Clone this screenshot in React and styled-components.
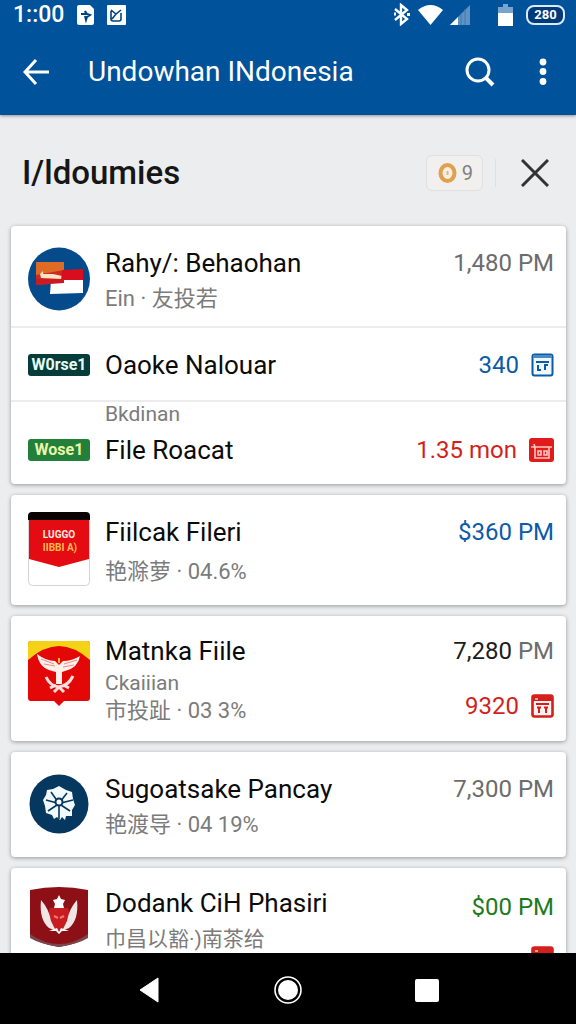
import React from "react";
import styled, { createGlobalStyle } from "styled-components";

const GlobalStyle = createGlobalStyle`
  * {
    box-sizing: border-box;
  }
  body {
    margin: 0;
    font-family: Roboto, "Noto Sans CJK SC", sans-serif;
    background: #000;
  }
`;

const Screen = styled.div`
  height: 100vh;
  display: flex;
  flex-direction: column;
  background: #ecedee;
`;

const Header = styled.header`
  background: #00529b;
  color: #fff;
  box-shadow: 0 1px 3px rgba(0, 0, 0, 0.4);
`;

const StatusBar = styled.div`
  height: 29px;
  padding: 0 11px 0 13px;
  display: flex;
  align-items: center;
  justify-content: space-between;
`;

const StatusGroup = styled.div`
  display: flex;
  align-items: center;
  gap: ${({ $gap }) => $gap}px;
`;

const Time = styled.span`
  font-size: 23px;
  font-weight: 500;
  line-height: 28px;
`;

const Percent = styled.span`
  width: 39px;
  height: 20px;
  border: 2px solid #d9ecff;
  border-radius: 8px;
  background: #003a78;
  font-size: 13px;
  font-weight: 700;
  line-height: 16px;
  text-align: center;
`;

const Toolbar = styled.div`
  height: 86px;
  padding: 0 23px;
  display: flex;
  align-items: center;
`;

const IconButton = styled.button`
  display: flex;
  align-items: center;
  justify-content: center;
  padding: 0;
  border: 0;
  background: none;
  color: inherit;
  cursor: pointer;
`;

const Title = styled.h1`
  flex: 1;
  margin: 0 0 0 38px;
  font-size: 28px;
  font-weight: 400;
  line-height: 36px;
`;

const Actions = styled.div`
  display: flex;
  gap: 38px;
`;

const Content = styled.main`
  flex: 1;
  min-height: 0;
  overflow-y: auto;
  scrollbar-width: none;
`;

const SectionHeader = styled.div`
  height: 111px;
  padding: 4px 27px 0 22px;
  display: flex;
  align-items: center;
`;

const SectionTitle = styled.h2`
  flex: 1;
  margin: 0;
  font-size: 33px;
  font-weight: 500;
  line-height: 40px;
  color: #161616;
`;

const Chip = styled.div`
  height: 36px;
  padding: 0 9px 0 11px;
  display: flex;
  align-items: center;
  gap: 5px;
  border: 1px solid #e0e0e0;
  border-radius: 6px;
  background: #f1f0ef;
  color: #808080;
  font-size: 20px;
`;

const Divider = styled.div`
  width: 1px;
  height: 28px;
  margin: 0 25px 0 12px;
  background: #dfdfdf;
`;

const List = styled.div`
  padding: 0 10px 12px 11px;
  display: flex;
  flex-direction: column;
  gap: 11px;
`;

const Card = styled.section`
  background: #fff;
  border-radius: 4px;
  box-shadow: 0 1px 4px rgba(0, 0, 0, 0.36);
`;

const Row = styled.div`
  padding: ${({ $pad }) => $pad};
  display: grid;
  grid-template-columns: 62px 1fr auto;
  column-gap: 15px;
  & + & {
    border-top: 2px solid #ececee;
  }
`;

const Logo = styled.div`
  display: flex;
  justify-content: center;
  align-self: ${({ $align }) => $align || "center"};
`;

const Badge = styled.span`
  width: 62px;
  height: 22px;
  margin-bottom: ${({ $low }) => ($low ? 5 : 0)}px;
  border-radius: 3px;
  background: ${({ $bg }) => $bg};
  color: ${({ $color }) => $color};
  font-size: 16px;
  font-weight: 700;
  line-height: 22px;
  text-align: center;
`;

const Texts = styled.div`
  display: flex;
  flex-direction: column;
  gap: ${({ $gap }) => $gap || 0}px;
  padding-top: ${({ $top }) => $top || 0}px;
`;

const Name = styled.h3`
  margin: 0;
  font-size: 26px;
  font-weight: 400;
  line-height: 32px;
  color: #0b0b0b;
`;

const Detail = styled.div`
  font-size: 21px;
  line-height: 24px;
  color: #7b7b7b;
`;

const Meta = styled(Detail)`
  font-size: 22px;
`;

const Side = styled.div`
  display: flex;
  flex-direction: column;
  align-items: flex-end;
  align-self: ${({ $align }) => $align || "start"};
  gap: 23px;
  padding-top: ${({ $top }) => $top || 0}px;
`;

const Amount = styled.div`
  display: flex;
  align-items: center;
  gap: 12px;
  font-size: 24px;
  line-height: 32px;
  color: ${({ $color }) => $color || "#6c6c6c"};
`;

const Unit = styled.span`
  color: #6c6c6c;
`;

const NavBar = styled.nav`
  height: 71px;
  padding-top: 3px;
  display: flex;
  align-items: center;
  justify-content: center;
  gap: 91px;
  background: #000;
`;

const NavButton = styled(IconButton)`
  width: 48px;
  height: 48px;
`;

const BLUE = "#0b5ba8";
const RED = "#d41f1c";

const SimIcon = () => (
  <svg width="17" height="20" viewBox="0 0 17 20">
    <path d="M2 0h11l4 4v14q0 2-2 2H2q-2 0-2-2V2q0-2 2-2z" fill="#fff" />
    <path d="M4 9h5l-1-3 2 3 3 1-3 2-1 3-1-4" fill="none" stroke="#00427f" strokeWidth="2" />
  </svg>
);

const PictureIcon = () => (
  <svg width="19" height="20" viewBox="0 0 19 20">
    <rect width="19" height="20" rx="1" fill="#fff" />
    <path d="M4 5l5 4 5-4M4 6v8q0 2 2 2h6q2 0 2-2V8M5 14l4-5" fill="none" stroke="#00427f" strokeWidth="1.600" />
  </svg>
);

const BluetoothIcon = () => (
  <svg width="18" height="23" viewBox="0 0 18 23" fill="none" stroke="#fff" strokeWidth="2.400">
    <path d="M2 6l12 10-6 5V2l6 5L2 17" />
    <path d="M1 11h2M14 11.500h3" strokeWidth="3" />
  </svg>
);

const WifiIcon = () => (
  <svg width="25" height="20" viewBox="0 0 25 20">
    <path d="M0 5Q12.500-5 25 5L12.500 20z" fill="#fff" />
  </svg>
);

const SignalIcon = () => (
  <svg width="20" height="20" viewBox="0 0 20 20">
    <path d="M20 0v20H0z" fill="#5e92c3" />
    <path d="M8 12v8H0z" fill="#fff" />
    <path d="M11 8v12M15 4v16" stroke="#4079b3" />
  </svg>
);

const BatteryIcon = () => (
  <svg width="15" height="22" viewBox="0 0 15 22">
    <path d="M5 0h5v3h5v6H0V3h5z" fill="#78a4cf" />
    <path d="M0 9h15v13H0z" fill="#fff" />
  </svg>
);

const BackIcon = () => (
  <svg width="27" height="26" viewBox="0 0 27 26" fill="none" stroke="#fff" strokeWidth="3">
    <path d="M26 13H3M13 1L2 13l11 12" />
  </svg>
);

const SearchIcon = () => (
  <svg width="30" height="30" viewBox="0 0 30 30" fill="none" stroke="#fff" strokeWidth="3">
    <circle cx="13" cy="13" r="11" />
    <path d="M21 21l7 7" strokeWidth="4" />
  </svg>
);

const MoreIcon = () => (
  <svg width="20" height="28" viewBox="0 0 20 28" fill="#fff">
    <circle cx="10" cy="4" r="3.400" />
    <circle cx="10" cy="13.500" r="3.400" />
    <circle cx="10" cy="23.500" r="3.400" />
  </svg>
);

const CoinIcon = () => (
  <svg width="19" height="20" viewBox="0 0 19 20">
    <ellipse cx="9.500" cy="10" rx="7" ry="8" fill="#fbf0df" stroke="#dfa050" strokeWidth="4" />
    <path d="M9.500 8v4" stroke="#d8b98d" strokeWidth="2" />
  </svg>
);

const CloseIcon = () => (
  <svg width="28" height="28" viewBox="0 0 28 28" stroke="#333" strokeWidth="3">
    <path d="M1 1l26 26M27 1L1 27" />
  </svg>
);

const DateIcon = () => (
  <svg width="23" height="24" viewBox="0 0 23 24" fill="none" stroke={BLUE} strokeWidth="2">
    <rect x="1.500" y="1.500" width="20" height="21" rx="2" fill="#f0f7fd" />
    <path d="M2 3.500h19" stroke="#4b8ac4" strokeWidth="3" />
    <path d="M5 9h13M7 12v5h3M14 12v5M13 12h4" />
  </svg>
);

const ShopIcon = () => (
  <svg width="25" height="24" viewBox="0 0 25 24">
    <rect width="25" height="24" rx="3" fill="#df1b1b" />
    <path d="M2 9h21M6 9v11h14V9M5 6l1 3M9 13v4h3v-4zM15 13v4h3v-4z" fill="none" stroke="#ffc9c2" strokeWidth="1.600" />
  </svg>
);

const CalendarIcon = () => (
  <svg width="23" height="24" viewBox="0 0 23 24">
    <rect x="1.500" y="1.500" width="20" height="21" rx="2" fill="#fff2ef" stroke={RED} strokeWidth="2.600" />
    <path d="M2 2h19v5H2z" fill={RED} />
    <path d="M4 5h3" stroke="#ff9e92" strokeWidth="2" />
    <path d="M5 10h13M6 13.500h4M13 13.500h4M8 13v6M15 13v6" fill="none" stroke={RED} strokeWidth="2" />
  </svg>
);

const FlagsLogo = () => (
  <svg width="62" height="64" viewBox="0 0 62 64">
    <ellipse cx="31" cy="32" rx="31" ry="31.500" fill="#054b8b" />
    <path d="M8 15h28v21l-28 2z" fill="#cf2a20" />
    <path d="M8 15h28v8L8 28z" fill="#dd6a25" />
    <path d="M12 27l3-3v3h10l9 2v3l-21-1z" fill="#ffe3c4" />
    <path d="M34 23l21-1v12H33z" fill="#d90d1d" />
    <path d="M23 33h32v13l-33 1z" fill="#fff" />
    <path d="M8 32h28v4l-28 2z" fill="#c91c22" />
  </svg>
);

const LabelText = styled.text`
  font-size: ${({ $size }) => $size}px;
  font-weight: 700;
  text-anchor: middle;
`;

const PackLogo = () => (
  <svg width="62" height="74" viewBox="0 0 62 74">
    <rect x="0.500" y="0.500" width="61" height="73" rx="4" fill="#fff" stroke="#d4d4d4" />
    <path d="M0 8V4q0-4 4-4h54q4 0 4 4v4z" fill="#090304" />
    <path d="M1 8h60v39L31 55 1 47z" fill="#e50b12" />
    <LabelText x="31" y="26" $size={10} fill="#ffe9df">LUGGO</LabelText>
    <LabelText x="32" y="39" $size={10} fill="#ffbc4b">IIBBI A)</LabelText>
  </svg>
);

const GarudaLogo = () => (
  <svg width="62" height="76" viewBox="0 0 62 76">
    <path d="M3 0h56q3 0 3 3v54q0 3-3 3H36l-5 5-5-5H3q-3 0-3-3V3q0-3 3-3z" fill="#e30707" />
    <path d="M3 0h56q3 0 3 3v16Q46 5 31 5T0 19V3q0-3 3-3z" fill="#f4d316" />
    <path d="M9 13q9 7 18 7l4 4 4-4q9 0 17-5-2 12-15 15l-3 1v12h-6V31l-4-1Q11 27 9 13z" fill="#fff0eb" />
    <path d="M13 18l13 5M16 23l11 2M49 19l-13 4M46 24l-11 2" stroke="#eb8a86" />
    <path d="M18 36q4 9 13 10 9-1 14-11M22 47l6-3M41 47l-6-3M26 51l5-5 5 5" fill="none" stroke="#ffe0da" strokeWidth="3" />
    <path d="M31 17v5" stroke="#f2af2d" strokeWidth="2" />
  </svg>
);

const FlowerLogo = () => (
  <svg width="60" height="62" viewBox="0 0 60 62">
    <circle cx="30" cy="30" r="29.500" fill="#06375f" />
    <path d="M30 12l7 4 6 2 1 7 2 6-3 5 0 6-6 0-1 4-3-3-2 3-3-3-3 2-2-4-6-2-1-7-2-6 3-5 1-5 6-1z" fill="#f2faff" />
    <path d="M30 30v15M29 28l-7-10M31 28l7-9M28 29l-11-3M32 29l12-3M28 31l-9 6M32 31l9 6" stroke="#06375f" strokeWidth="1.600" />
    <circle cx="30" cy="28" r="3.500" fill="#fff" stroke="#06375f" strokeWidth="2" />
  </svg>
);

const ShieldLogo = () => (
  <svg width="58" height="60" viewBox="0 0 58 60">
    <path d="M0 3Q29-3 58 3v47q-10 7-29 10Q10 57 0 50z" fill="#8c1015" />
    <path d="M0 47q14 10 29 10t29-10v4q-10 6-29 9Q10 57 0 51z" fill="#7a474a" />
    <path d="M29 8l2 4 4 1-2 4 1 4H24l1-4-2-4 4-1z" fill="#fff" />
    <path d="M20 21h18l3 9-6 13h-12l-6-13z" fill="#c71c20" />
    <path d="M11 13q-2 20 8 28l7 3-5-10q-2-12-10-21zM47 13q2 20-8 28l-7 3 5-10q2-12 10-21z" fill="#f2e5e5" />
    <path d="M19 44l8-3 2 4 2-4 8 3-7 0-3 3-3-3z" fill="#fff" />
    <path d="M24 29l4 2M34 29l-4 2" stroke="#ff7770" strokeWidth="2" />
  </svg>
);

const App = () => {
  return (
    <>
      <GlobalStyle />
      <Screen>
        <Header>
          <StatusBar>
            <StatusGroup $gap={13}>
              <Time>1::00</Time>
              <SimIcon />
              <PictureIcon />
            </StatusGroup>
            <StatusGroup $gap={13}>
              <StatusGroup $gap={28}>
                <StatusGroup $gap={7}>
                  <BluetoothIcon />
                  <WifiIcon />
                  <SignalIcon />
                </StatusGroup>
                <BatteryIcon />
              </StatusGroup>
              <Percent>280</Percent>
            </StatusGroup>
          </StatusBar>
          <Toolbar>
            <IconButton aria-label="Back">
              <BackIcon />
            </IconButton>
            <Title>Undowhan INdonesia</Title>
            <Actions>
              <IconButton aria-label="Search">
                <SearchIcon />
              </IconButton>
              <IconButton aria-label="More">
                <MoreIcon />
              </IconButton>
            </Actions>
          </Toolbar>
        </Header>

        <Content>
          <SectionHeader>
            <SectionTitle>I/ldoumies</SectionTitle>
            <Chip>
              <CoinIcon />
              <span>9</span>
            </Chip>
            <Divider />
            <IconButton aria-label="Close">
              <CloseIcon />
            </IconButton>
          </SectionHeader>

          <List>
            <Card>
              <Row $pad="21px 12px 15px 17px">
                <Logo>
                  <FlagsLogo />
                </Logo>
                <Texts $gap={8}>
                  <Name>Rahy/: Behaohan</Name>
                  <Meta>Ein · 友投若</Meta>
                </Texts>
                <Side>
                  <Amount>1,480 PM</Amount>
                </Side>
              </Row>
              <Row $pad="21px 12px 19px 17px">
                <Logo>
                  <Badge $bg="#063c39" $color="#e4fbf5">W0rse1</Badge>
                </Logo>
                <Name>Oaoke Nalouar</Name>
                <Side>
                  <Amount $color={BLUE}>
                    340
                    <DateIcon />
                  </Amount>
                </Side>
              </Row>
              <Row $pad="0 12px 18px 17px">
                <Logo $align="end">
                  <Badge $low $bg="#23803a" $color="#eaf7a8">Wose1</Badge>
                </Logo>
                <Texts $gap={8}>
                  <Detail>Bkdinan</Detail>
                  <Name>File Roacat</Name>
                </Texts>
                <Side $align="end">
                  <Amount $color={RED}>
                    1.35 mon
                    <ShopIcon />
                  </Amount>
                </Side>
              </Row>
            </Card>

            <Card>
              <Row $pad="17px 12px 19px 17px">
                <Logo>
                  <PackLogo />
                </Logo>
                <Texts $top={4} $gap={12}>
                  <Name>Fiilcak Fileri</Name>
                  <Meta>艳滁萝 · 04.6%</Meta>
                </Texts>
                <Side $top={4}>
                  <Amount $color={BLUE}>$360 PM</Amount>
                </Side>
              </Row>
            </Card>

            <Card>
              <Row $pad="19px 12px 18px 17px">
                <Logo>
                  <GarudaLogo />
                </Logo>
                <Texts $gap={4}>
                  <Name>Matnka Fiile</Name>
                  <Detail>Ckaiiian</Detail>
                  <Meta>市投趾 · 03 3%</Meta>
                </Texts>
                <Side>
                  <Amount $color="#1c1c1c">
                    <span>
                      7,280 <Unit>PM</Unit>
                    </span>
                  </Amount>
                  <Amount $color={RED}>
                    9320
                    <CalendarIcon />
                  </Amount>
                </Side>
              </Row>
            </Card>

            <Card>
              <Row $pad="21px 12px 20px 17px">
                <Logo>
                  <FlowerLogo />
                </Logo>
                <Texts $gap={8}>
                  <Name>Sugoatsake Pancay</Name>
                  <Meta>艳渡导 · 04 19%</Meta>
                </Texts>
                <Side>
                  <Amount>7,300 PM</Amount>
                </Side>
              </Row>
            </Card>

            <Card>
              <Row $pad="19px 12px 19px 17px">
                <Logo $align="start">
                  <ShieldLogo />
                </Logo>
                <Texts $gap={8}>
                  <Name>Dodank CiH Phasiri</Name>
                  <Detail>巾昌以豁·)南茶给</Detail>
                </Texts>
                <Side $top={4}>
                  <Amount $color="#207a1b">$00 PM</Amount>
                  <Amount $color={RED}>
                    <CalendarIcon />
                  </Amount>
                </Side>
              </Row>
            </Card>
          </List>
        </Content>

        <NavBar>
          <NavButton aria-label="Back">
            <svg width="20" height="26" viewBox="0 0 20 26">
              <path d="M19 1v24L1 13z" fill="#fff" stroke="#fff" strokeLinejoin="round" />
            </svg>
          </NavButton>
          <NavButton aria-label="Home">
            <svg width="28" height="28" viewBox="0 0 28 28">
              <circle cx="14" cy="14" r="13" fill="none" stroke="#fff" strokeWidth="1.600" />
              <circle cx="14" cy="14" r="10" fill="#fff" />
            </svg>
          </NavButton>
          <NavButton aria-label="Recent apps">
            <svg width="24" height="23" viewBox="0 0 24 23">
              <rect width="24" height="23" rx="2" fill="#fff" />
            </svg>
          </NavButton>
        </NavBar>
      </Screen>
    </>
  );
};

export default App;
